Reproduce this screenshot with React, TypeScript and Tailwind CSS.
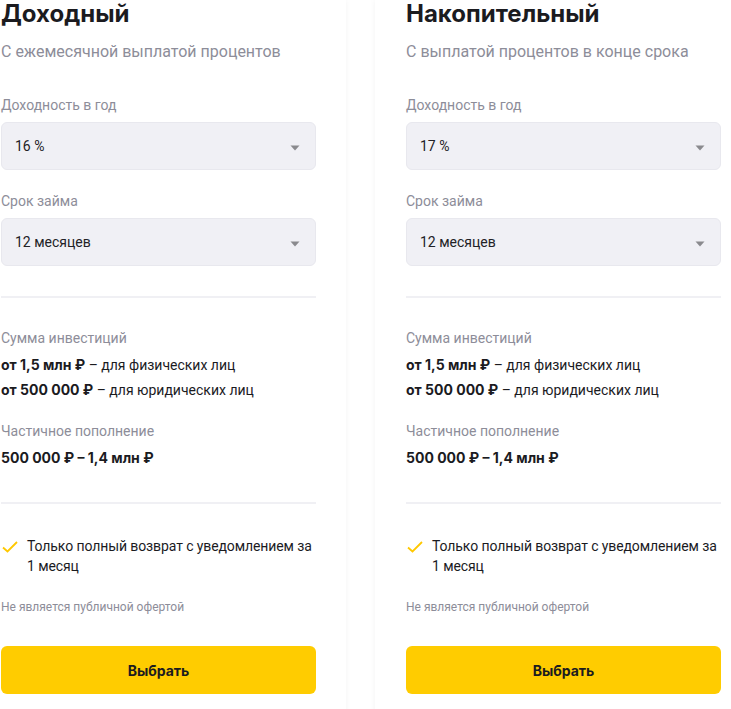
import React from "react";

interface Plan {
  title: string;
  subtitle: string;
  rate: string;
}

const plans: Plan[] = [
  { title: "Доходный", subtitle: "С ежемесячной выплатой процентов", rate: "16 %" },
  { title: "Накопительный", subtitle: "С выплатой процентов в конце срока", rate: "17 %" },
];

function Select({ value }: { value: string }) {
  return (
    <div className="flex h-[48px] items-center justify-between rounded-[6px] border border-[#e8e8ee] bg-[#f0f0f5] pl-[13px] pr-[15px]">
      <span className="text-[14px] leading-[20px] text-[#222226]">{value}</span>
      <svg width="10" height="6" viewBox="0 0 10 6" className="mt-[3px]">
        <path d="M0.5 0.5 L9.5 0.5 L5 5.5 Z" fill="#8a8a8e" />
      </svg>
    </div>
  );
}

function Label({ children, className = "" }: { children: React.ReactNode; className?: string }) {
  return <div className={`text-[14px] leading-[20px] text-[#8d8d99] ${className}`}>{children}</div>;
}

// bold figures look closer in Inter
function Strong({ children }: { children: React.ReactNode }) {
  return <b className="font-['Inter',sans-serif] font-bold">{children}</b>;
}

function PlanCard({ plan }: { plan: Plan }) {
  return (
    <div className="w-[376px] shrink-0 bg-white pl-[31px] pr-[30px] pb-[40px] shadow-[0_0_6px_rgba(0,0,0,0.05)]">
      <h2 className="font-['Inter',sans-serif] text-[24px] font-bold leading-[28px] text-[#1b1b1f]">
        {plan.title}
      </h2>
      <p className="mt-[12px] text-[16px] leading-[24px] text-[#8d8d99]">{plan.subtitle}</p>

      <Label className="mt-[31px]">Доходность в год</Label>
      <div className="mt-[7px]">
        <Select value={plan.rate} />
      </div>

      <Label className="mt-[21px]">Срок займа</Label>
      <div className="mt-[7px]">
        <Select value="12 месяцев" />
      </div>

      <div className="mt-[30px] h-[2px] bg-[#f0f0f4]" />

      <Label className="mt-[30px]">Сумма инвестиций</Label>
      <div className="mt-[7px] text-[14px] leading-[20px] text-[#1b1b1f]">
        <Strong>от 1,5 млн ₽</Strong> – для физических лиц
      </div>
      <div className="mt-[5px] text-[14px] leading-[20px] text-[#1b1b1f]">
        <Strong>от 500 000 ₽</Strong> – для юридических лиц
      </div>

      <Label className="mt-[21px]">Частичное пополнение</Label>
      <div className="mt-[7px] text-[14px] leading-[20px] text-[#1b1b1f]">
        <Strong>500 000 ₽ – 1,4 млн ₽</Strong>
      </div>

      <div className="mt-[34px] h-[2px] bg-[#f0f0f4]" />

      <div className="mt-[32px] flex gap-[9px]">
        <svg width="16" height="12" viewBox="0 0 16 12" className="mt-[5px] ml-[1px] shrink-0">
          <path d="M1 6.5 L5.5 10.5 L15 1" fill="none" stroke="#ffc800" strokeWidth="1.8" />
        </svg>
        <p className="text-[14px] leading-[20px] tracking-[-0.1px] text-[#1b1b1f]">
          Только полный возврат с уведомлением за 1 месяц
        </p>
      </div>

      <p className="mt-[23px] text-[12px] leading-[16px] text-[#8d8d99]">Не является публичной офертой</p>

      <button className="mt-[31px] flex h-[48px] w-full items-center justify-center rounded-[6px] bg-[#ffcc00] font-['Inter',sans-serif] text-[14px] font-bold text-[#1b1b1f]">
        Выбрать
      </button>
    </div>
  );
}

export default function App() {
  return (
    <div className="h-[709px] w-full overflow-hidden bg-white font-['Roboto','Noto_Sans',sans-serif]">
      <div className="-ml-[30px] flex gap-[29px]">
        {plans.map((plan) => (
          <PlanCard key={plan.title} plan={plan} />
        ))}
      </div>
    </div>
  );
}
